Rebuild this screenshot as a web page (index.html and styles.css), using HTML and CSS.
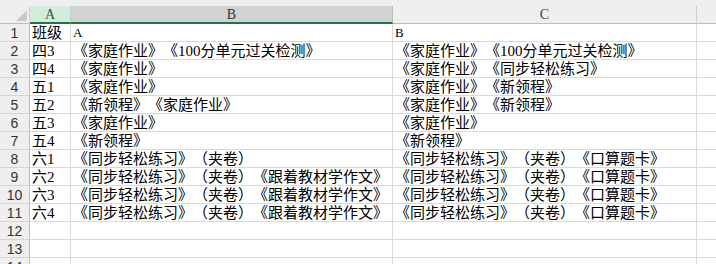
FILE: index.html
```html
<!DOCTYPE html>
<html lang="zh-CN">
<head>
<meta charset="utf-8">
<link rel="stylesheet" href="styles.css">
</head>
<body>
<div class="sheet">
  <div class="grid">
    <div class="corner"><svg class="tri" width="11" height="11" viewBox="0 0 11 11"><polygon points="11,0 11,11 0,11" fill="#c8c8c8"/></svg></div>
    <div class="colhead active">A</div>
    <div class="colhead sel">B</div>
    <div class="colhead">C</div>
    <div class="colhead last"></div>

    <div class="rowhead">1</div><div class="cell">班级</div><div class="cell lat">A</div><div class="cell lat">B</div><div class="cell last"></div>
    <div class="rowhead">2</div><div class="cell">四3</div><div class="cell">《家庭作业》《100分单元过关检测》</div><div class="cell">《家庭作业》《100分单元过关检测》</div><div class="cell last"></div>
    <div class="rowhead">3</div><div class="cell">四4</div><div class="cell">《家庭作业》</div><div class="cell">《家庭作业》《同步轻松练习》</div><div class="cell last"></div>
    <div class="rowhead">4</div><div class="cell">五1</div><div class="cell">《家庭作业》</div><div class="cell">《家庭作业》《新领程》</div><div class="cell last"></div>
    <div class="rowhead">5</div><div class="cell">五2</div><div class="cell">《新领程》《家庭作业》</div><div class="cell">《家庭作业》《新领程》</div><div class="cell last"></div>
    <div class="rowhead">6</div><div class="cell">五3</div><div class="cell">《家庭作业》</div><div class="cell">《家庭作业》</div><div class="cell last"></div>
    <div class="rowhead">7</div><div class="cell">五4</div><div class="cell">《新领程》</div><div class="cell">《新领程》</div><div class="cell last"></div>
    <div class="rowhead">8</div><div class="cell">六1</div><div class="cell">《同步轻松练习》（夹卷）</div><div class="cell">《同步轻松练习》（夹卷）《口算题卡》</div><div class="cell last"></div>
    <div class="rowhead">9</div><div class="cell">六2</div><div class="cell">《同步轻松练习》（夹卷）《跟着教材学作文》</div><div class="cell">《同步轻松练习》（夹卷）《口算题卡》</div><div class="cell last"></div>
    <div class="rowhead">10</div><div class="cell">六3</div><div class="cell">《同步轻松练习》（夹卷）《跟着教材学作文》</div><div class="cell">《同步轻松练习》（夹卷）《口算题卡》</div><div class="cell last"></div>
    <div class="rowhead">11</div><div class="cell">六4</div><div class="cell">《同步轻松练习》（夹卷）《跟着教材学作文》</div><div class="cell">《同步轻松练习》（夹卷）《口算题卡》</div><div class="cell last"></div>
    <div class="rowhead">12</div><div class="cell"></div><div class="cell"></div><div class="cell"></div><div class="cell last"></div>
    <div class="rowhead">13</div><div class="cell"></div><div class="cell"></div><div class="cell"></div><div class="cell last"></div>
    <div class="rowhead">14</div><div class="cell"></div><div class="cell"></div><div class="cell"></div><div class="cell last"></div>
  </div>
</div>
</body>
</html>
```

FILE: styles.css
```css
html, body {
  margin: 0;
  padding: 0;
  background: #ffffff;
  overflow: hidden;
}
.sheet {
  width: 716px;
  height: 264px;
  overflow: hidden;
  background: #ffffff;
  padding-top: 6px;
  box-sizing: border-box;
  position: relative;
  font-family: "Liberation Serif", "Noto Sans CJK SC", serif;
  font-size: 15px;
  font-kerning: none;
  font-feature-settings: "kern" 0, "palt" 0, "halt" 0;
  text-spacing-trim: space-all;
  color: #000;
}
.sheet::before {
  content: "";
  display: block;
  position: absolute;
  left: 0; top: 0; right: 0;
  height: 6px;
  background: #efefef;
}
.grid {
  display: grid;
  grid-template-columns: 30px 41px 322px 304px 1fr;
  grid-auto-rows: 18px;
}
.corner {
  background: #efefef;
  border-right: 1px solid #d0d0d0;
  border-bottom: 1px solid #bdbdbd;
  box-sizing: border-box;
  display: flex;
  justify-content: flex-end;
  align-items: flex-end;
  padding: 0 2px 2px 0;
}
.tri { display: block; }
.colhead {
  background: #efefef;
  border-right: 1px solid #d0d0d0;
  border-bottom: 1px solid #bdbdbd;
  box-sizing: border-box;
  text-align: center;
  line-height: 17px;
  color: #444;
  font-size: 14px;
}
.colhead.active {
  background: #d3ecdd;
  color: #1d5c36;
  border-bottom: 2px solid #217346;
  border-right: 1px solid #b9d6c3;
}
.colhead.sel {
  background: #d2d2d2;
  color: #333;
  border-bottom: 2px solid #217346;
  border-right: 1px solid #bdbdbd;
}
.colhead.last { border-right: none; }
.rowhead {
  background: #efefef;
  border-right: 1px solid #bdbdbd;
  border-bottom: 1px solid #d4d4d4;
  box-sizing: border-box;
  text-align: center;
  line-height: 18px;
  color: #333;
  font-family: "Liberation Sans", sans-serif;
  font-size: 14px;
}
.cell {
  border-right: 1px solid #dadada;
  border-bottom: 1px solid #dadada;
  box-sizing: border-box;
  padding-left: 2px;
  line-height: 18px;
  white-space: nowrap;
  overflow: visible;
}
.cell.lat { font-size: 13px; }
.cell.last { border-right: none; }
```
